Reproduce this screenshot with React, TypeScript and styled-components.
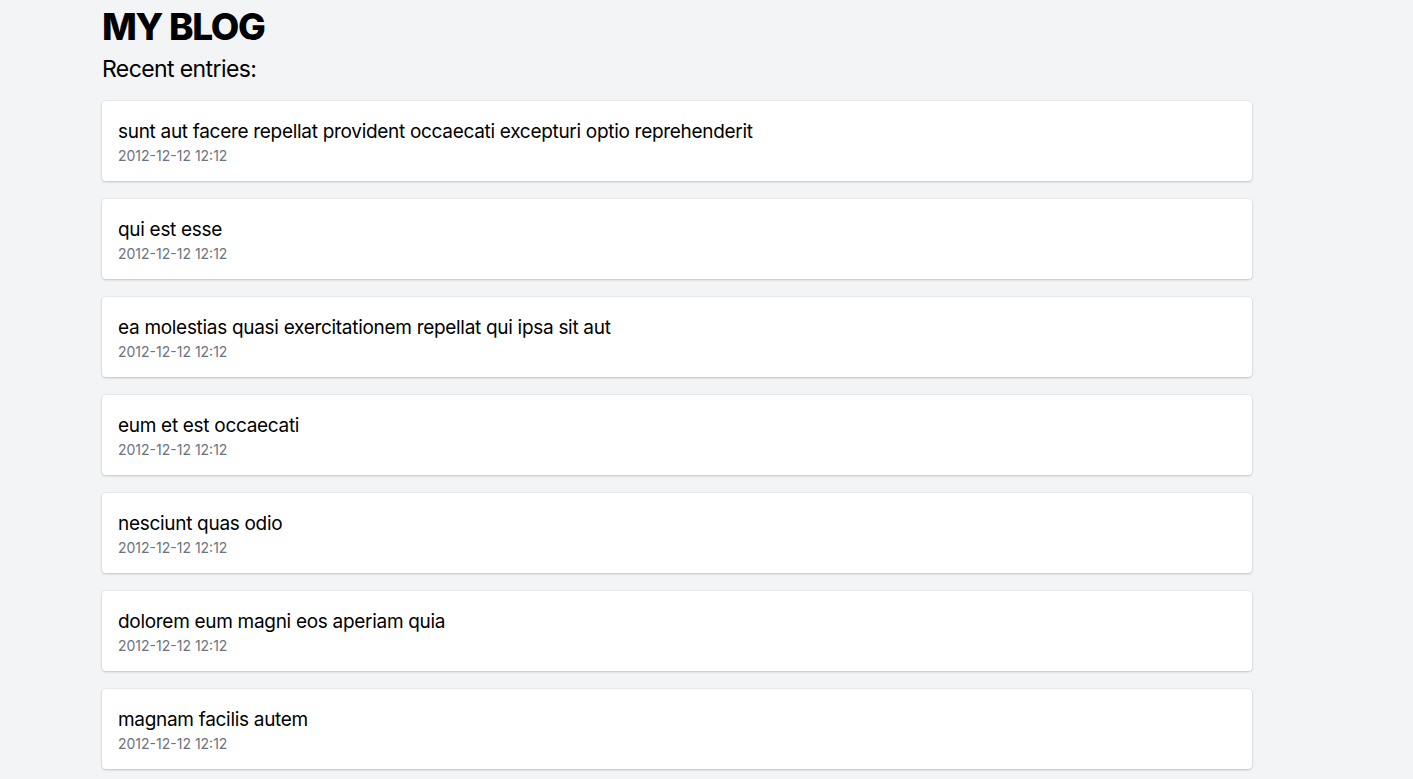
import React from 'react'
import styled, { createGlobalStyle } from 'styled-components'

const GlobalStyle = createGlobalStyle`
  body {
    margin: 0;
    background: #f3f4f6;
    font-family: Inter, "Noto Sans", "Liberation Sans", sans-serif;
    color: #000;
  }
`

const Page = styled.main`
  width: 1150px;
  margin-left: 102px;
  padding-bottom: 24px;
`

const Title = styled.h1`
  margin: 3px 0 0;
  font-size: 37px;
  line-height: 48px;
  font-weight: 800;
  letter-spacing: -1.3px;
`

const Subtitle = styled.h2`
  margin: 2px 0 16px;
  font-size: 23px;
  line-height: 32px;
  font-weight: 400;
  letter-spacing: -0.6px;
`

const List = styled.ul`
  list-style: none;
  margin: 0;
  padding: 0;
  display: flex;
  flex-direction: column;
  gap: 18px;
`

const Card = styled.li`
  background: #fff;
  border-radius: 4px;
  box-shadow: 0 0 0 1px rgba(0, 0, 0, 0.03), 0 1px 3px rgba(0, 0, 0, 0.12), 0 1px 2px rgba(0, 0, 0, 0.06);
  padding: 17px 16px 15px;
`

const EntryTitle = styled.div`
  font-size: 19px;
  line-height: 28px;
  letter-spacing: -0.3px;
`

const EntryDate = styled.div`
  font-size: 14px;
  line-height: 20px;
  color: #6b7280;
`

const entries = [
  'sunt aut facere repellat provident occaecati excepturi optio reprehenderit',
  'qui est esse',
  'ea molestias quasi exercitationem repellat qui ipsa sit aut',
  'eum et est occaecati',
  'nesciunt quas odio',
  'dolorem eum magni eos aperiam quia',
  'magnam facilis autem',
]

export default function App() {
  return (
    <>
      <GlobalStyle />
      <Page>
        <Title>MY BLOG</Title>
        <Subtitle>Recent entries:</Subtitle>
        <List>
          {entries.map((title) => (
            <Card key={title}>
              <EntryTitle>{title}</EntryTitle>
              <EntryDate>2012-12-12 12:12</EntryDate>
            </Card>
          ))}
        </List>
      </Page>
    </>
  )
}
